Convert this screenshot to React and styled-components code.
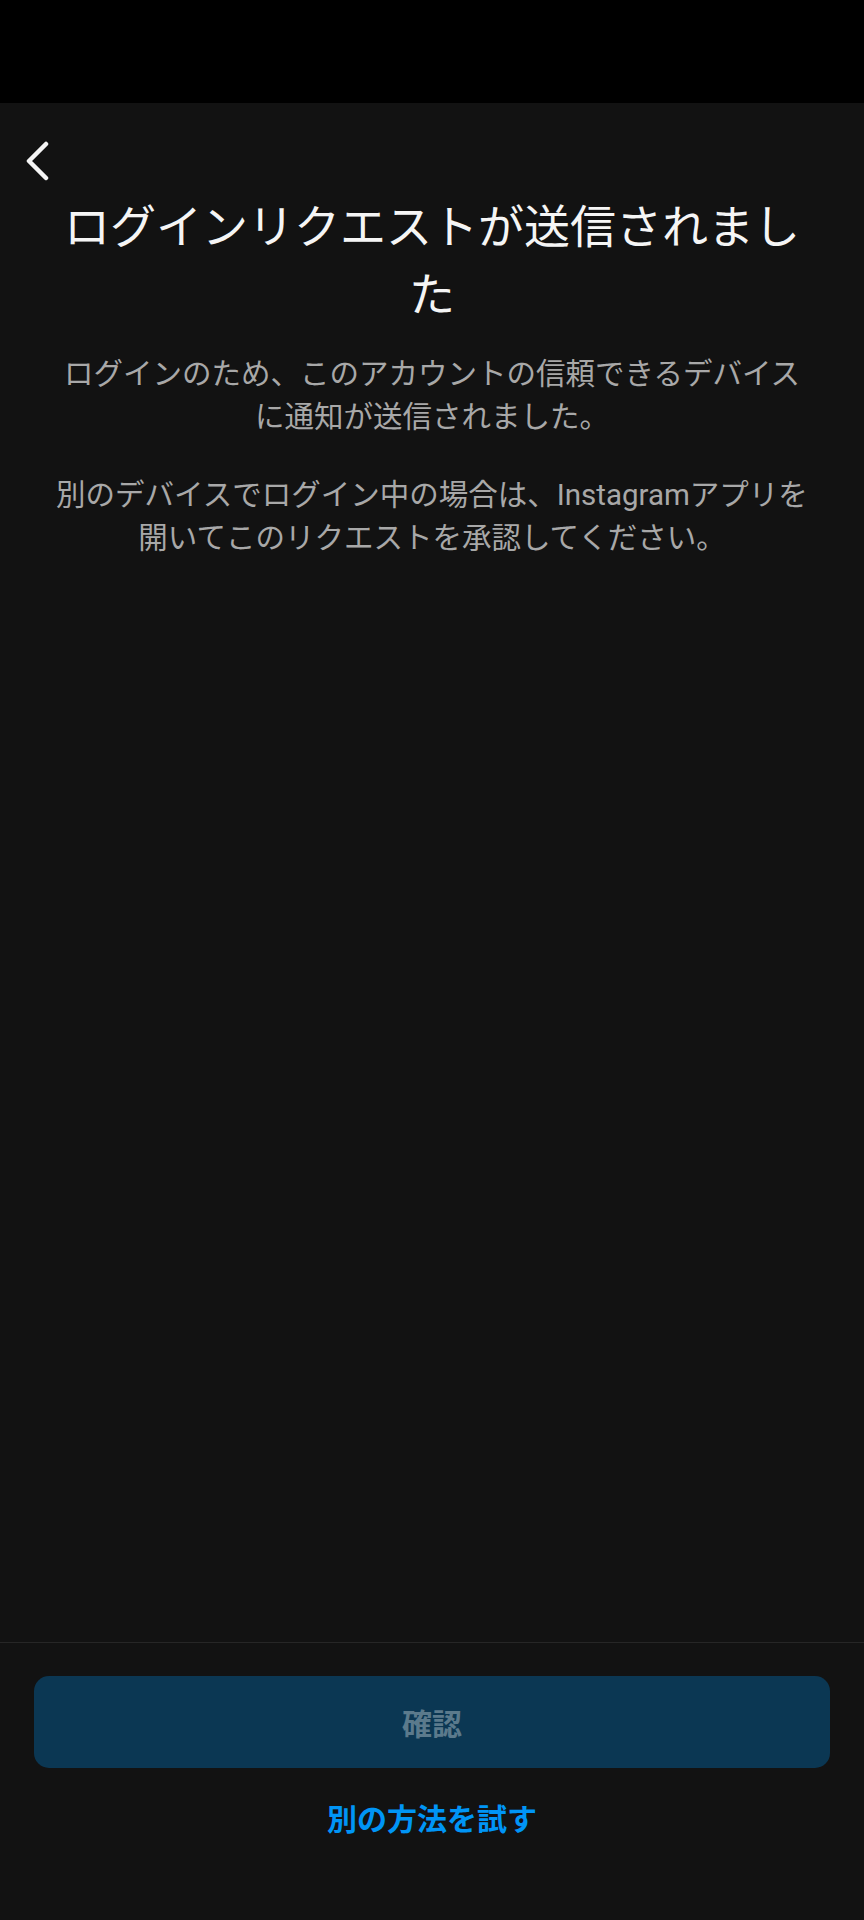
import React from "react";
import styled, { createGlobalStyle } from "styled-components";

const GlobalStyle = createGlobalStyle`
  html, body {
    margin: 0;
    padding: 0;
    background: #121212;
  }
  body {
    font-family: Roboto, "Noto Sans CJK JP", sans-serif;
  }
`;

const Screen = styled.div`
  min-height: 100vh;
  display: flex;
  flex-direction: column;
  background: #121212;
`;

const StatusBar = styled.div`
  height: 103px;
  background: #000;
`;

const Header = styled.div`
  height: 90px;
  padding: 38px 0 0 25px;
  box-sizing: border-box;
`;

const BackButton = styled.button`
  width: 26px;
  height: 40px;
  padding: 0;
  border: none;
  background: none;
  cursor: pointer;
  display: flex;
  align-items: center;
`;

const Content = styled.div`
  flex: 1;
  padding: 0 52px;
  text-align: center;
`;

const Title = styled.h1`
  margin: 0 0 24px;
  font-size: 46px;
  line-height: 68px;
  font-weight: 400;
  color: #f5f5f5;
`;

const Text = styled.p`
  margin: 0 0 35px;
  font-size: 29.5px;
  line-height: 43px;
  color: #a8a8a8;
`;

const Footer = styled.div`
  border-top: 1px solid #262626;
  padding: 33px 34px 80px;
  display: flex;
  flex-direction: column;
  align-items: stretch;
`;

const ConfirmButton = styled.button`
  height: 92px;
  border: none;
  border-radius: 15px;
  background: #0b3753;
  color: #5b7a8c;
  font-family: inherit;
  font-size: 30px;
  font-weight: 700;
  cursor: default;
`;

const AltLink = styled.a`
  margin-top: 32px;
  line-height: 40px;
  font-size: 30px;
  font-weight: 700;
  color: #0095f6;
  text-align: center;
  text-decoration: none;
  cursor: pointer;
`;

function ChevronLeft() {
  return (
    <svg width="26" height="40" viewBox="0 0 26 40" fill="none">
      <path
        d="M21 3 L4 20 L21 37"
        stroke="#f5f5f5"
        strokeWidth="4.5"
        strokeLinecap="round"
        strokeLinejoin="round"
      />
    </svg>
  );
}

export default function App() {
  return (
    <>
      <GlobalStyle />
      <Screen>
        <StatusBar />
        <Header>
          <BackButton aria-label="戻る">
            <ChevronLeft />
          </BackButton>
        </Header>
        <Content>
          <Title>ログインリクエストが送信されました</Title>
          <Text>ログインのため、このアカウントの信頼できるデバイスに通知が送信されました。</Text>
          <Text>別のデバイスでログイン中の場合は、Instagramアプリを開いてこのリクエストを承認してください。</Text>
        </Content>
        <Footer>
          <ConfirmButton disabled>確認</ConfirmButton>
          <AltLink>別の方法を試す</AltLink>
        </Footer>
      </Screen>
    </>
  );
}
